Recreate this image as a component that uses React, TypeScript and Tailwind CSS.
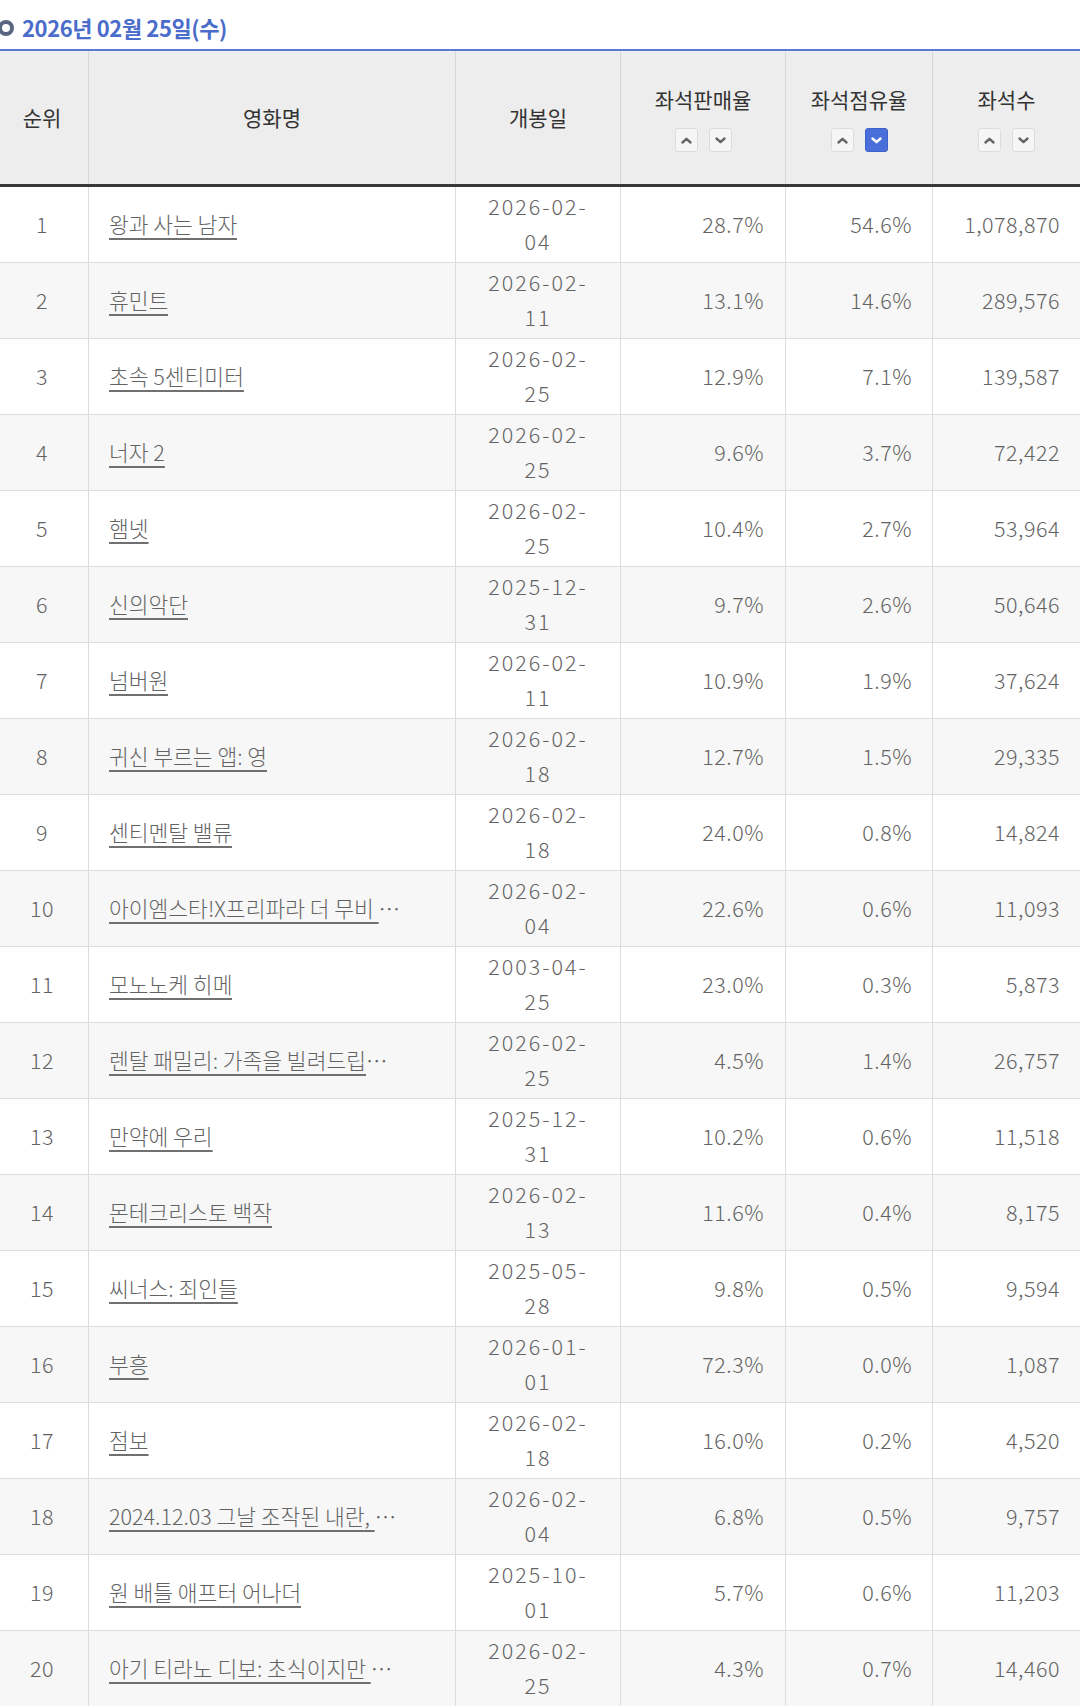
import React from "react";

type Row = [number, string, string, string, string, string, string];

const rows: Row[] = [
  [1, "왕과 사는 남자", "2026-02-", "04", "28.7%", "54.6%", "1,078,870"],
  [2, "휴민트", "2026-02-", "11", "13.1%", "14.6%", "289,576"],
  [3, "초속 5센티미터", "2026-02-", "25", "12.9%", "7.1%", "139,587"],
  [4, "너자 2", "2026-02-", "25", "9.6%", "3.7%", "72,422"],
  [5, "햄넷", "2026-02-", "25", "10.4%", "2.7%", "53,964"],
  [6, "신의악단", "2025-12-", "31", "9.7%", "2.6%", "50,646"],
  [7, "넘버원", "2026-02-", "11", "10.9%", "1.9%", "37,624"],
  [8, "귀신 부르는 앱: 영", "2026-02-", "18", "12.7%", "1.5%", "29,335"],
  [9, "센티멘탈 밸류", "2026-02-", "18", "24.0%", "0.8%", "14,824"],
  [10, "아이엠스타!X프리파라 더 무비 ~우리들의 꿈~", "2026-02-", "04", "22.6%", "0.6%", "11,093"],
  [11, "모노노케 히메", "2003-04-", "25", "23.0%", "0.3%", "5,873"],
  [12, "렌탈 패밀리: 가족을 빌려드립니다", "2026-02-", "25", "4.5%", "1.4%", "26,757"],
  [13, "만약에 우리", "2025-12-", "31", "10.2%", "0.6%", "11,518"],
  [14, "몬테크리스토 백작", "2026-02-", "13", "11.6%", "0.4%", "8,175"],
  [15, "씨너스: 죄인들", "2025-05-", "28", "9.8%", "0.5%", "9,594"],
  [16, "부흥", "2026-01-", "01", "72.3%", "0.0%", "1,087"],
  [17, "점보", "2026-02-", "18", "16.0%", "0.2%", "4,520"],
  [18, "2024.12.03 그날 조작된 내란, 그리고 민주주의", "2026-02-", "04", "6.8%", "0.5%", "9,757"],
  [19, "원 배틀 애프터 어나더", "2025-10-", "01", "5.7%", "0.6%", "11,203"],
  [20, "아기 티라노 디보: 초식이지만 괜찮아", "2026-02-", "25", "4.3%", "0.7%", "14,460"],
];

const Chevron = ({ up, color }: { up?: boolean; color: string }) => (
  <svg width="11" height="7" viewBox="0 0 11 7" fill="none">
    <path
      d={up ? "M1.5 5.5 L5.5 1.8 L9.5 5.5" : "M1.5 1.5 L5.5 5.2 L9.5 1.5"}
      stroke={color}
      strokeWidth="2.4"
      strokeLinecap="round"
      strokeLinejoin="round"
    />
  </svg>
);

const SortButtons = ({ activeDown }: { activeDown?: boolean }) => (
  <div className="flex gap-[11px]">
    <button
      type="button"
      className="flex h-[24px] w-[23px] items-center justify-center rounded-[3px] border border-[#dcdcdc] bg-[#f6f6f6]"
    >
      <Chevron up color="#666666" />
    </button>
    {activeDown ? (
      <button
        type="button"
        className="flex h-[24px] w-[23px] items-center justify-center rounded-[3px] border border-[#3f62c9] bg-[#4a6fdb]"
      >
        <Chevron color="#ffffff" />
      </button>
    ) : (
      <button
        type="button"
        className="flex h-[24px] w-[23px] items-center justify-center rounded-[3px] border border-[#dcdcdc] bg-[#f6f6f6]"
      >
        <Chevron color="#666666" />
      </button>
    )}
  </div>
);

export default function App() {
  return (
    <div className="w-[1080px] overflow-hidden bg-white font-['Noto_Sans_CJK_KR','Noto_Sans',sans-serif]">
      {/* 날짜 제목 */}
      <div className="flex h-[49px] items-center gap-[8px] pt-[6px]">
        <span className="ml-[-2px] h-[16px] w-[16px] rounded-full border-4 border-[#59667f]" />
        <h2 className="text-[22px] font-bold tracking-[-0.4px] text-[#4a6cca]">2026년 02월 25일(수)</h2>
      </div>

      <div className="border-t-2 border-[#5878d1]">
        {/* 헤더 */}
        <div className="flex h-[136px] border-b-[3px] border-[#383838] bg-[#ededed] text-[21px] text-[#333]">
          <div className="flex w-[89px] items-center justify-center border-r border-[#d6d6d6] pr-[4px]">순위</div>
          <div className="flex w-[367px] items-center justify-center border-r border-[#d6d6d6]">영화명</div>
          <div className="flex w-[165px] items-center justify-center border-r border-[#d6d6d6]">개봉일</div>
          <div className="flex w-[165px] flex-col items-center justify-center gap-[15px] border-r border-[#d6d6d6] pt-[2px]">
            <span className="leading-[28px]">좌석판매율</span>
            <SortButtons />
          </div>
          <div className="flex w-[147px] flex-col items-center justify-center gap-[15px] border-r border-[#d6d6d6] pt-[2px]">
            <span className="leading-[28px]">좌석점유율</span>
            <SortButtons activeDown />
          </div>
          <div className="flex w-[147px] flex-col items-center justify-center gap-[15px] pt-[2px]">
            <span className="leading-[28px]">좌석수</span>
            <SortButtons />
          </div>
        </div>

        {/* 목록 */}
        {rows.map(([rank, title, d1, d2, sale, share, seats]) => (
          <div
            key={rank}
            className={
              rank % 2 === 0
                ? "flex h-[76px] border-b border-[#dddddd] bg-[#f7f7f7] text-[21.5px] font-light text-[#636363]"
                : "flex h-[76px] border-b border-[#dddddd] bg-white text-[21.5px] font-light text-[#636363]"
            }
          >
            <div className="flex w-[89px] items-center justify-center border-r border-[#dddddd] pr-[4px] tracking-[0.5px]">
              {rank}
            </div>
            <div className="flex w-[367px] items-center border-r border-[#dddddd] pl-[20px] pr-[53px]">
              <div className="min-w-0 overflow-hidden text-ellipsis whitespace-nowrap">
                <a href="#" className="underline decoration-[#707070] underline-offset-[5px]">
                  {title}
                </a>
              </div>
            </div>
            <div className="flex w-[165px] flex-col items-center justify-center border-r border-[#dddddd] pb-[4px] leading-[35px] tracking-[2px]">
              <span>{d1}</span>
              <span>{d2}</span>
            </div>
            <div className="flex w-[165px] items-center justify-end border-r border-[#dddddd] pr-[21px] tracking-[0.5px]">
              {sale}
            </div>
            <div className="flex w-[147px] items-center justify-end border-r border-[#dddddd] pr-[20px] tracking-[0.5px]">
              {share}
            </div>
            <div className="flex w-[147px] items-center justify-end pr-[20px] tracking-[0.5px]">{seats}</div>
          </div>
        ))}
      </div>
    </div>
  );
}
